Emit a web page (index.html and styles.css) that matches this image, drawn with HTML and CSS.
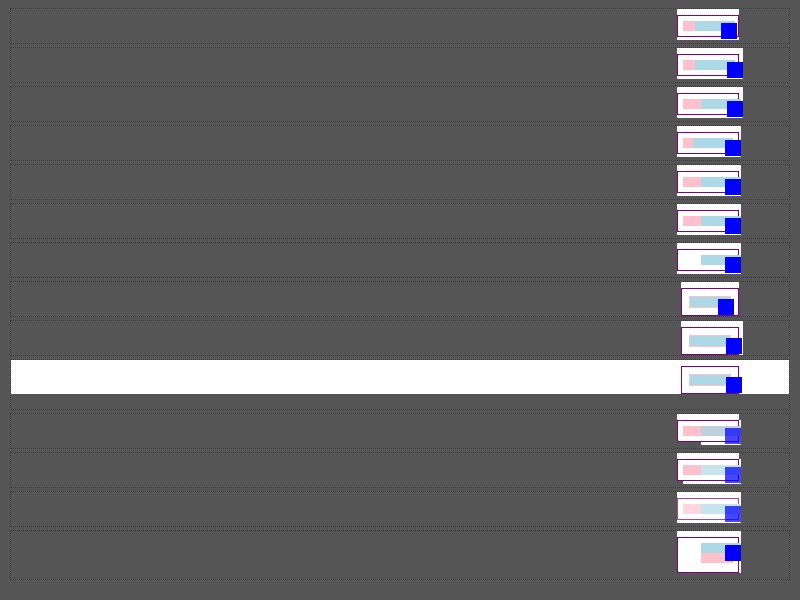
FILE: index.html
```html
<!DOCTYPE html>
<html>
<head>
<meta charset="utf-8">
<link rel="stylesheet" href="styles.css">
</head>
<body>
<div class="row"><div class="w w62"><div class="p"><div class="pk pk12"></div><div class="lb"></div></div><div class="sq s44"></div></div></div>
<div class="row"><div class="w w66"><div class="p"><div class="pk pk12"></div><div class="lb"></div></div><div class="sq s50"></div></div></div>
<div class="row"><div class="w w66"><div class="p"><div class="pk pk18"></div><div class="lb"></div></div><div class="sq s50"></div></div></div>
<div class="row"><div class="w w64"><div class="p"><div class="pk pk10"></div><div class="lb"></div></div><div class="sq s48"></div></div></div>
<div class="row"><div class="w w64"><div class="p"><div class="pk pk18"></div><div class="lb"></div></div><div class="sq s48"></div></div></div>
<div class="row"><div class="w w64"><div class="p"><div class="pk pk18"></div><div class="lb"></div></div><div class="sq s48"></div></div></div>
<div class="row"><div class="w w64"><div class="p"><div class="pk pk18 none"></div><div class="lb"></div></div><div class="sq s48"></div></div></div>
<div class="row"><div class="w w58 tall nar"><div class="p2"><div class="bx"></div></div><div class="sq s37 t17"></div></div></div>
<div class="row"><div class="w w62 tall nar"><div class="p2"><div class="bx"></div></div><div class="sq s45 t17"></div></div></div>
<div class="row row-big"><div class="band"><div class="w w58 tall nar clear"><div class="p2"><div class="bx"></div></div><div class="sq s45 t17"></div></div></div></div>
<div class="row"><div class="w w62 short"><div class="wb wb24"></div><div class="p"><div class="pk pk18"></div><div class="lb lb-gray"></div></div><div class="sq s48 semi"></div></div></div>
<div class="row"><div class="w w62 short"><div class="wb wb6"></div><div class="p"><div class="pk pk18"></div><div class="lb lb-pale"></div></div><div class="sq s48 semi"></div></div></div>
<div class="row"><div class="w w64"><div class="p p-semi"><div class="pk pk18 pk-pale"></div><div class="lb lb-pale"></div></div><div class="sq s48 semi"></div></div></div>
<div class="row row-14"><div class="w w64 w42"><div class="p p36"><div class="lb lb-off"></div><div class="pk pk32 pk-off"></div></div><div class="sq s48"></div></div></div>
</body>
</html>
```
FILE: styles.css
```css
html, body {
  background: #555555;
}
body {
  margin: 8px 10px;
  font-family: "Liberation Sans", Arial, sans-serif;
}
.row {
  height: 34px;
  border: 1px dotted #3d3d3d;
  margin-bottom: 3px;
}
.row-big { height: 49px; }
.row-14 { height: 48px; }
.band {
  height: 34px;
  background: #ffffff;
  padding-top: 0;
}
.w {
  position: relative;
  z-index: 0;
  box-sizing: border-box;
  height: 31px;
  padding-top: 6px;
  margin-left: 666px;
  background: #ffffff;
}
.w.nar { margin-left: 670px; }
.w.tall { height: 34px; }
.w.short { height: 28px; }
.w.w42 { height: 42px; }
.w.clear { background: transparent; }
.w62 { width: 62px; }
.w66 { width: 66px; }
.w64 { width: 64px; }
.w58 { width: 58px; }

.p {
  box-sizing: border-box;
  width: 62px;
  height: 22px;
  border: 1px solid #800080;
  padding: 5px;
  display: flex;
}
.p-semi { border-color: rgba(128, 0, 128, 0.72); }
.p36 {
  height: 36px;
  flex-direction: column;
}
.pk {
  flex-shrink: 0;
  height: 10px;
  background: #ffc0cb;
}
.pk10 { width: 10px; }
.pk12 { width: 12px; }
.pk18 { width: 18px; }
.pk32 { width: 32px; }
.pk.none { background: transparent; }
.pk-pale { background: #ffd6dd; }
.pk-off { margin-left: 18px; }
.lb {
  flex-shrink: 0;
  width: 40px;
  height: 10px;
  background: #add8e6;
}
.lb-gray { background: #c0d1de; }
.lb-pale { background: #c7e4ed; }
.lb-off { margin-left: 18px; }

.p2 {
  box-sizing: border-box;
  width: 58px;
  height: 28px;
  border: 1px solid #800080;
  padding: 7px;
}
.bx {
  width: 40px;
  height: 10px;
  border: 1px solid #ffc0cb;
  background: #add8e6;
}

.wb {
  position: absolute;
  z-index: -1;
  top: 6px;
  right: -2px;
  height: 25px;
  background: #ffffff;
}
.wb24 { left: 24px; }
.wb6 { left: 6px; }

.sq {
  position: absolute;
  top: 14px;
  width: 16px;
  height: 16px;
  background: #0000ff;
}
.sq.t17 { top: 17px; }
.sq.semi { background: rgba(0, 0, 255, 0.72); }
.s37 { left: 37px; }
.s44 { left: 44px; }
.s45 { left: 45px; }
.s48 { left: 48px; }
.s50 { left: 50px; }
```
